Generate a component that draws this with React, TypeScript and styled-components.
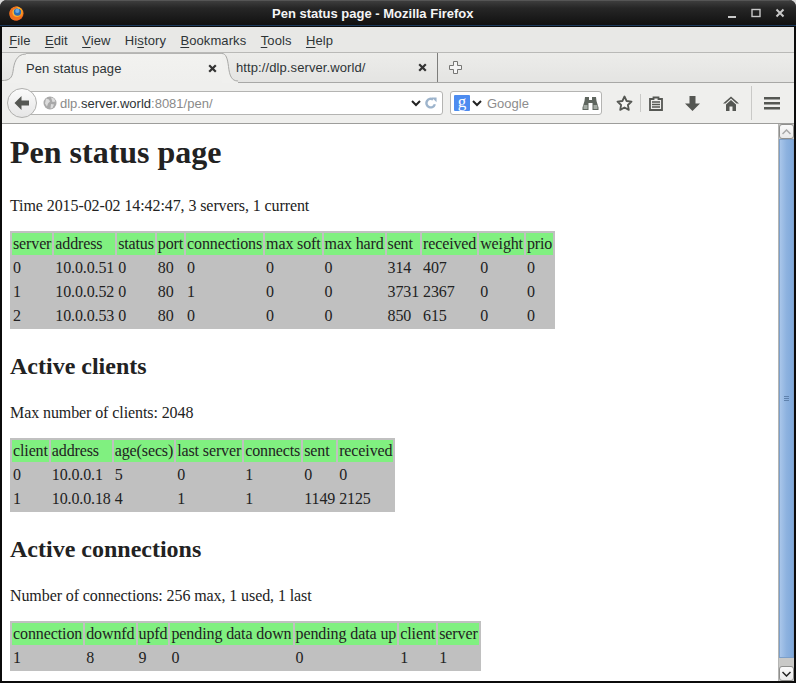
import React from "react";
import styled, { createGlobalStyle } from "styled-components";

const Global = createGlobalStyle`
  html, body { margin: 0; padding: 0; background: #d8d8d8; overflow: hidden; }
  body { width: 796px; height: 683px; }
`;

const Win = styled.div`
  width: 796px; height: 683px; box-sizing: border-box;
  display: flex; flex-direction: column;
  background: #0b0b0b; border-radius: 7px 7px 0 0; overflow: hidden;
  padding: 0 2px 2px 2px;
  font-family: "Liberation Sans", Arial, sans-serif;
`;
const TitleBar = styled.div`
  height: 26px; flex: none; margin: 0 -2px; padding: 0 11px 0 9px;
  display: flex; align-items: center;
  background: linear-gradient(#3d3d3d, #262626 30%, #111 100%);
  border-top: 1px solid #555; box-sizing: border-box;
  border-bottom: 1px solid #1c3a5c;
`;
const Title = styled.div`
  color: #f4f4f4; font-size: 13px; font-weight: 700; white-space: nowrap;
  margin-left: 248px; flex: 1;
`;
const WinButtons = styled.div`display: flex; gap: 14px; align-items: center;`;
const MenuBar = styled.div`
  height: 26px; flex: none; display: flex; align-items: center; padding-top: 2px;
  background: #e8e8e6; border-bottom: 1px solid #b9b9b7; box-sizing: border-box;
  margin-top: 1px; font-size: 13px; letter-spacing: 0.1px; color: #2e3436;
`;
const MenuItem = styled.span`
  padding: 0 7.2px;
  u { text-decoration: underline; text-underline-offset: 2px; }
`;
const TabStrip = styled.div`
  height: 30px; flex: none; display: flex; align-items: stretch;
  background: linear-gradient(#ececea, #e4e4e2);
  border-bottom: 1px solid #a8a8a6; box-sizing: border-box; font-size: 13px; letter-spacing: 0.1px; color: #2e3436;
`;
const ActiveTab = styled.div`
  display: flex; align-items: stretch; margin-bottom: -1px;
`;
const TabBody = styled.div<{ $w: number }>`
  width: ${(p) => p.$w}px; box-sizing: border-box; display: flex; align-items: center; justify-content: space-between;
  padding: 0 5px 0 0;
  background: linear-gradient(#f2f2f0, #efefed);
  border-top: 1px solid #b4b4b2;
`;
const PlainTab = styled.div`
  width: 202px; margin-left: -2px; padding: 0 10px 0 0; box-sizing: border-box;
  display: flex; align-items: center; justify-content: space-between;
  border-right: 1px solid #7d7d7b;
`;
const NewTab = styled.div`display: flex; align-items: center; padding: 0 0 1px 11px;`;
const NavBar = styled.div`
  height: 41px; flex: none; box-sizing: border-box; padding-left: 5px;
  display: flex; align-items: center;
  background: #efefed; border-bottom: 1px solid #9d9d9b;
`;
const BackButton = styled.div`
  width: 30px; height: 30px; box-sizing: border-box; border-radius: 50%;
  background: linear-gradient(#fbfbfb, #e6e6e6); border: 1px solid #b0b0ae; flex: none;
  display: flex; align-items: center; justify-content: center; z-index: 1;
`;
const UrlBar = styled.div`
  width: 413px; height: 24px; margin-left: -7px; box-sizing: border-box; flex: none;
  background: #fff; border: 1px solid #b4b4b2; border-radius: 0 3px 3px 0;
  display: flex; align-items: center; padding: 0 5px 0 12px; font-size: 13px; color: #8a8a8a;
`;
const UrlText = styled.div`
  flex: 1; margin-left: 3px; white-space: nowrap;
  b { font-weight: 400; color: #2e3436; }
`;
const ReloadIcon = styled.svg`margin-left: 4px;`;
const SearchBox = styled.div`
  width: 152px; height: 24px; margin: 0 6px 0 7px; box-sizing: border-box; flex: none;
  background: #fff; border: 1px solid #b4b4b2; border-radius: 3px;
  display: flex; align-items: center; padding: 0 2px 0 3px; font-size: 13px; color: #8d8d8d;
`;
const GoogleG = styled.span`
  width: 16px; height: 16px; background: #4d8cf0; color: #fff; border-radius: 1px;
  display: flex; align-items: center; justify-content: center; font: 400 17px/14px "Liberation Serif", serif;
  padding-bottom: 3px; box-sizing: border-box;
`;
const SearchChevron = styled.span`margin-left: 2px; display: flex;`;
const SearchText = styled.span`flex: 1; margin-left: 5px;`;
const ToolIcons = styled.div`display: flex; align-items: center; flex: 1; height: 100%;`;
const ToolBtn = styled.div<{ $w: number }>`
  width: ${(p) => p.$w}px; flex: none; display: flex; align-items: center; justify-content: center;
`;
const Sep = styled.div<{ $h: number; $ml?: number }>`
  width: 1px; height: ${(p) => p.$h}px; margin-left: ${(p) => p.$ml ?? 0}px; background: #c9c9c7; flex: none;
`;
const Content = styled.div`
  flex: 1; display: flex; min-height: 0; background: #fff;
`;
const Page = styled.div`
  flex: 1; min-width: 0; overflow: hidden; padding: 0 8px;
  font-family: "Liberation Serif", "Times New Roman", serif; font-size: 16px; color: #222;
`;
const H1 = styled.h1`font-size: 32px; line-height: 37px; font-weight: 700; margin: 10px 0 26px;`;
const H2 = styled.h2`font-size: 24px; line-height: 27px; font-weight: 700; margin: 24px 0 -1px;`;
const P = styled.p`margin: 25px 0 0; line-height: 18px; letter-spacing: -0.09px;`;
const Table = styled.table<{ $ls: number }>`
  border-collapse: separate; border-spacing: 2px; background: #c0c0c0; margin-top: 16px;
  font-size: 16px; letter-spacing: ${(p) => p.$ls}px;
`;
const Th = styled.td`
  background: #80f080; padding: 1px; line-height: 20px; white-space: nowrap;
`;
const Td = styled.td`
  padding: 1px; line-height: 20px; white-space: nowrap;
`;
const ScrollBar = styled.div`
  width: 15px; flex: none; display: flex; flex-direction: column;
  background: #c9c9c7; border-left: 1px solid #b5b5b3;
`;
const ScrollBtn = styled.div`
  height: 15px; flex: none; background: linear-gradient(#fafafa, #e9e9e9);
  border: 1px solid #8f8f8d; border-radius: 3px; box-sizing: border-box;
  display: flex; align-items: center; justify-content: center;
`;
const Thumb = styled.div`
  flex: 1; background: linear-gradient(90deg, #a9c6ea, #8db2df 50%, #7fa8da);
  border: 1px solid #7d9fc8; box-sizing: border-box; display: flex; align-items: center; justify-content: center;
`;
const Grip = styled.div`
  width: 5px; height: 5px; border-top: 1px solid #5f82ad; border-bottom: 1px solid #5f82ad; box-sizing: border-box;
  background: linear-gradient(#5f82ad, #5f82ad) center/100% 1px no-repeat;
`;
const Trough = styled.div`height: 8px; flex: none;`;

const Firefox = () => (
  <svg width="15" height="15" viewBox="0 0 17 17">
    <defs>
      <radialGradient id="ff1" cx="50%" cy="40%" r="60%">
        <stop offset="0" stopColor="#ffe05a" />
        <stop offset="0.6" stopColor="#ffa020" />
        <stop offset="1" stopColor="#e0481a" />
      </radialGradient>
    </defs>
    <circle cx="8.5" cy="8.5" r="8" fill="url(#ff1)" />
    <circle cx="9.6" cy="6.8" r="4.2" fill="#2f6cb0" />
    <circle cx="9.4" cy="5.6" r="2.4" fill="#6aa8e0" />
    <path d="M2 4C4 1 8 0 11 1c-2 0-3 1-3.500 2C5 3 3.500 5 3.800 8c.3 3 3 5 6 4.500 2-.3 3.400-1.600 4-3 .5 3.500-2.300 7-6 7C3.500 16.500.5 13 .5 9 .5 7 1 5.300 2 4z" fill="#f0701e" />
    <path d="M9 1c3 .3 5.500 2.400 6.500 5-1.300-1.800-3.300-3-5.300-3L9 1z" fill="#fbb028" />
  </svg>
);
const Close = ({ c = "#333" }: { c?: string }) => (
  <svg width="9" height="9" viewBox="0 0 9 9"><path d="M1.200 1.200l6.600 6.600M7.800 1.200L1.200 7.800" stroke={c} strokeWidth="2.200" /></svg>
);
const Chevron = ({ c = "#222" }: { c?: string }) => (
  <svg width="10" height="7" viewBox="0 0 10 7"><path d="M1 1l4 4 4-4" fill="none" stroke={c} strokeWidth="2" /></svg>
);

const mono = "#555753";

export default function App() {
  return (
    <Win>
      <Global />
      <TitleBar>
        <Firefox />
        <Title>Pen status page - Mozilla Firefox</Title>
        <WinButtons>
          <svg width="10" height="10" viewBox="0 0 10 10"><path d="M1 9h8" stroke="#c8c8c8" strokeWidth="2" /></svg>
          <svg width="10" height="10" viewBox="0 0 10 10"><rect x="1" y="1.500" width="8" height="7" fill="none" stroke="#c8c8c8" strokeWidth="1.400" /></svg>
          <svg width="10" height="10" viewBox="0 0 10 10"><path d="M1.500 1.500l7 7M8.500 1.500l-7 7" stroke="#c8c8c8" strokeWidth="2" /></svg>
        </WinButtons>
      </TitleBar>
      <MenuBar>
        <MenuItem><u>F</u>ile</MenuItem>
        <MenuItem><u>E</u>dit</MenuItem>
        <MenuItem><u>V</u>iew</MenuItem>
        <MenuItem>Hi<u>s</u>tory</MenuItem>
        <MenuItem><u>B</u>ookmarks</MenuItem>
        <MenuItem><u>T</u>ools</MenuItem>
        <MenuItem><u>H</u>elp</MenuItem>
      </MenuBar>
      <TabStrip>
        <ActiveTab>
          <svg width="24" height="30" viewBox="0 0 24 30">
            <path d="M0 28c8 0 10-3 11-9 1-8 3-18 13-18v29H0z" fill="#f0f0ee" />
            <path d="M0 27.500c8 0 10-3 11-9 1-8 3-17.500 13-17.500" fill="none" stroke="#a8a8a6" />
          </svg>
          <TabBody $w={196}>
            <span>Pen status page</span>
            <Close />
          </TabBody>
          <svg width="16" height="30" viewBox="0 0 16 30">
            <path d="M0 1c4 0 5.500 5 6.500 13 1 8 3 14 9.500 14v2H0z" fill="#f0f0ee" />
            <path d="M0 .5c4 0 5.500 5 6.500 13 1 9 3 14.500 9.500 14.500" fill="none" stroke="#a8a8a6" />
          </svg>
        </ActiveTab>
        <PlainTab>
          <span>http://dlp.server.world/</span>
          <Close />
        </PlainTab>
        <NewTab>
          <svg width="13" height="13" viewBox="0 0 13 13"><path d="M4.500.5h4v4h4v4h-4v4h-4v-4h-4v-4h4z" fill="#f5f5f5" stroke="#767674" /></svg>
        </NewTab>
      </TabStrip>
      <NavBar>
        <BackButton>
          <svg width="16" height="14" viewBox="0 0 16 14"><path d="M7.500 0L0.500 7l7 7V9.500H15v-5H7.500z" fill={mono} /></svg>
        </BackButton>
        <UrlBar>
          <svg width="14" height="14" viewBox="0 0 14 14">
            <circle cx="7" cy="7" r="6.500" fill="#a9a9a9" />
            <path d="M3 2.500l3 1 1 2-2 2-1 3-2-3zM8 1.500l3 1 1.500 3-3 .5zM8 8l3 .5-1.500 3.500-2 .5z" fill="#dcdcdc" />
          </svg>
          <UrlText>dlp.<b>server.world</b>:8081/pen/</UrlText>
          <Chevron />
          <ReloadIcon width="12" height="12" viewBox="0 0 14 14">
            <path d="M11.500 8.500A5 5 0 1 1 9.500 3" fill="none" stroke="#9db4cc" strokeWidth="2.800" />
            <path d="M8 0.500h5.500V6z" fill="#9db4cc" />
          </ReloadIcon>
        </UrlBar>
        <SearchBox>
          <GoogleG>g</GoogleG>
          <SearchChevron><Chevron /></SearchChevron>
          <SearchText>Google</SearchText>
          <svg width="17" height="15" viewBox="0 0 17 15">
            <path d="M3 1h4v3h3V1h4l.5 4 2 6.500V14H10.500V7h-4v7H.5v-2.500l2-6.500z" fill="#5f665f" />
            <rect x="1.500" y="9" width="4" height="4" fill="#a3aaa3" />
            <rect x="11.500" y="9" width="4" height="4" fill="#a3aaa3" />
          </svg>
        </SearchBox>
        <ToolIcons>
          <ToolBtn $w={32}>
            <svg width="17" height="16" viewBox="0 0 17 16"><path d="M8.500 1.500l2.100 4.500 4.900.6-3.600 3.400.9 4.900-4.300-2.400-4.300 2.400.9-4.900-3.600-3.400 4.900-.6z" fill="#f6f6f4" stroke={mono} strokeWidth="1.800" strokeLinejoin="round" /></svg>
          </ToolBtn>
          <Sep $h={18} />
          <ToolBtn $w={29}>
            <svg width="14" height="15" viewBox="0 0 14 15">
              <path d="M4.500 1.500h5V3H13v11H1V3h3.500z" fill="none" stroke={mono} strokeWidth="1.800" />
              <path d="M3 6h8M3 8.500h8M3 11h8" stroke={mono} strokeWidth="1.500" />
            </svg>
          </ToolBtn>
          <ToolBtn $w={45}>
            <svg width="15" height="15" viewBox="0 0 15 15"><path d="M4.500 0h6v7.500H15L7.500 15 0 7.500h4.500z" fill={mono} /></svg>
          </ToolBtn>
          <ToolBtn $w={32}>
            <svg width="16" height="15" viewBox="0 0 16 15"><path d="M8 .5L0 7.500h2.500l5.500-5 5.500 5H16z" fill={mono} /><path d="M8 4l-5 4.500V15h3.500v-4.500h3V15H13V8.500z" fill={mono} /></svg>
          </ToolBtn>
          <Sep $h={34} $ml={4} />
          <ToolBtn $w={40}>
            <svg width="16" height="13" viewBox="0 0 16 13"><path d="M0 0h16v2.600H0zM0 5h16v2.600H0zM0 10h16v2.600H0z" fill={mono} /></svg>
          </ToolBtn>
        </ToolIcons>
      </NavBar>
      <Content>
        <Page>
          <H1>Pen status page</H1>
          <P>Time 2015-02-02 14:42:47, 3 servers, 1 current</P>
          <Table $ls={-0.13}>
            <tbody>
              <tr>{["server","address","status","port","connections","max soft","max hard","sent","received","weight","prio"].map((h) => <Th key={h}>{h}</Th>)}</tr>
              {[["0","10.0.0.51","0","80","0","0","0","314","407","0","0"],["1","10.0.0.52","0","80","1","0","0","3731","2367","0","0"],["2","10.0.0.53","0","80","0","0","0","850","615","0","0"]].map((r, i) => (
                <tr key={i}>{r.map((c, j) => <Td key={j}>{c}</Td>)}</tr>
              ))}
            </tbody>
          </Table>
          <H2>Active clients</H2>
          <P>Max number of clients: 2048</P>
          <Table $ls={-0.12}>
            <tbody>
              <tr>{["client","address","age(secs)","last server","connects","sent","received"].map((h) => <Th key={h}>{h}</Th>)}</tr>
              {[["0","10.0.0.1","5","0","1","0","0"],["1","10.0.0.18","4","1","1","1149","2125"]].map((r, i) => (
                <tr key={i}>{r.map((c, j) => <Td key={j}>{c}</Td>)}</tr>
              ))}
            </tbody>
          </Table>
          <H2>Active connections</H2>
          <P>Number of connections: 256 max, 1 used, 1 last</P>
          <Table $ls={-0.1}>
            <tbody>
              <tr>{["connection","downfd","upfd","pending data down","pending data up","client","server"].map((h) => <Th key={h}>{h}</Th>)}</tr>
              <tr>{["1","8","9","0","0","1","1"].map((c, j) => <Td key={j}>{c}</Td>)}</tr>
            </tbody>
          </Table>
        </Page>
        <ScrollBar>
          <ScrollBtn><svg width="9" height="6" viewBox="0 0 9 6"><path d="M.5 5l4-4 4 4" fill="none" stroke="#a8a8a8" strokeWidth="1.500" /></svg></ScrollBtn>
          <Thumb><Grip /></Thumb>
          <Trough />
          <ScrollBtn><svg width="9" height="6" viewBox="0 0 9 6"><path d="M.5 1l4 4 4-4" fill="none" stroke="#222" strokeWidth="1.500" /></svg></ScrollBtn>
        </ScrollBar>
      </Content>
    </Win>
  );
}
